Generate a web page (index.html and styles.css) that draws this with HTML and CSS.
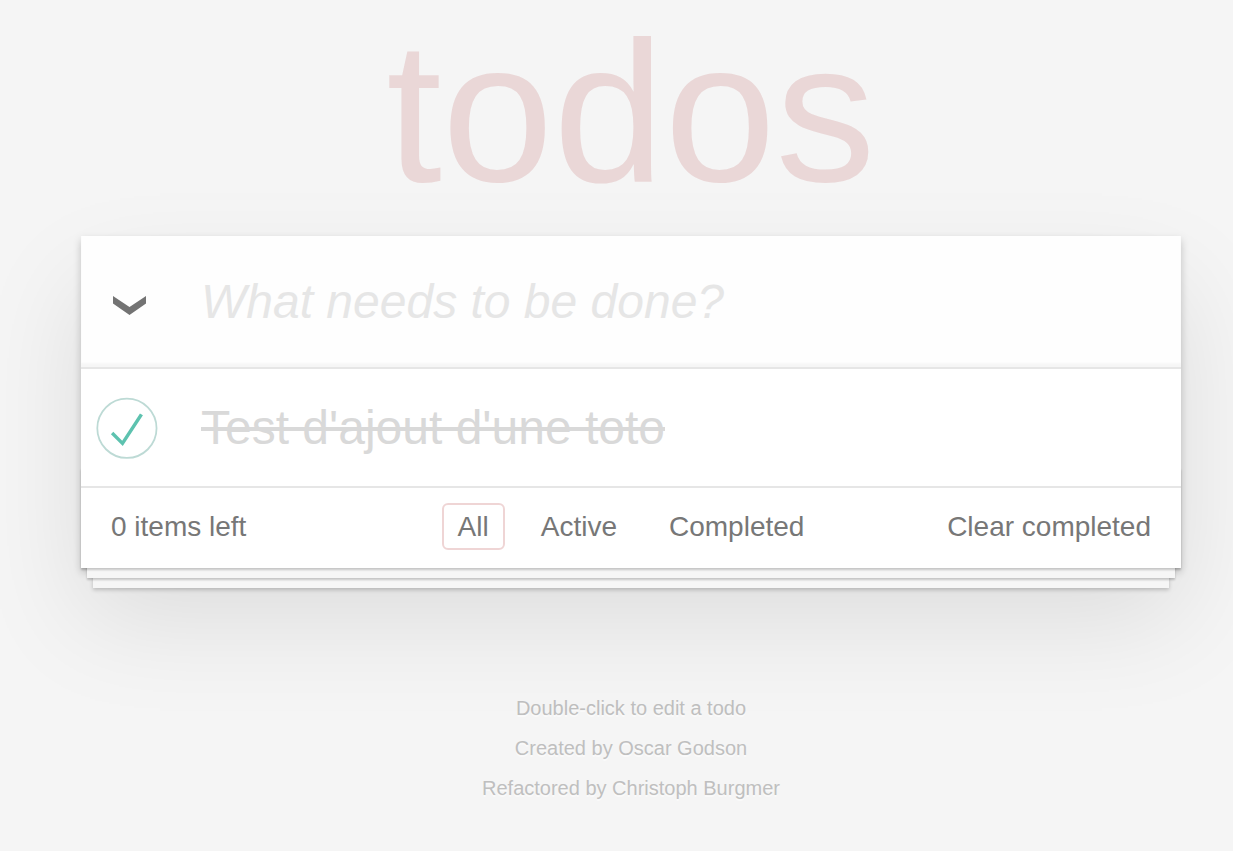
FILE: index.html
```html
<!DOCTYPE html>
<html lang="fr">
<head>
<meta charset="utf-8">
<title>todos</title>
<link rel="stylesheet" href="styles.css">
</head>
<body>
<div class="page">
  <h1 class="title">todos</h1>
  <section class="todoapp">
    <header class="header">
      <span class="toggle-all">
        <svg class="chevron" width="33" height="19" viewBox="0 0 33 19"><polygon points="0,0 16.5,11 33,0 33,7.5 16.5,19 0,7.5" fill="#737373"/></svg>
      </span>
      <input class="new-todo" placeholder="What needs to be done?">
    </header>
    <ul class="todo-list">
      <li class="todo completed">
        <svg class="toggle" width="80" height="80" viewBox="-10 -18 100 135"><circle cx="50" cy="50" r="50" fill="none" stroke="#bddad5" stroke-width="3"/><path fill="#5dc2af" d="M72 25L42 71 27 56l-4 4 20 20 34-52z"/></svg>
        <span class="label">Test d'ajout d'une toto</span>
      </li>
    </ul>
    <footer class="footer">
      <span class="todo-count">0 items left</span>
      <ul class="filters">
        <li><a class="filter selected">All</a></li>
        <li><a class="filter">Active</a></li>
        <li><a class="filter">Completed</a></li>
      </ul>
      <span class="clear-completed">Clear completed</span>
    </footer>
  </section>
  <footer class="info">
    <p>Double-click to edit a todo</p>
    <p>Created by Oscar Godson</p>
    <p>Refactored by Christoph Burgmer</p>
  </footer>
</div>
</body>
</html>
```
FILE: styles.css
```css
html, body {
  margin: 0;
  padding: 0;
}

body {
  background: #f5f5f5;
  color: #4d4d4d;
  font-family: "Liberation Sans", Arial, Helvetica, sans-serif;
  font-size: 28px;
}

.page {
  width: 1100px;
  margin: 0 0 0 81px;
  padding-top: 12px;
}

.title {
  margin: 0 0 24px;
  height: 200px;
  font-size: 200px;
  line-height: 200px;
  font-weight: 100;
  text-align: center;
  color: rgba(175, 47, 47, 0.15);
}

.todoapp {
  background: #fff;
  position: relative;
  box-shadow: 0 4px 8px 0 rgba(0, 0, 0, 0.2),
              0 50px 100px 0 rgba(0, 0, 0, 0.1);
}

.header {
  display: flex;
  align-items: center;
  height: 131px;
  background: rgba(0, 0, 0, 0.003);
  box-shadow: inset 0 -4px 2px rgba(0, 0, 0, 0.03);
}

.toggle-all {
  width: 120px;
  flex: none;
  box-sizing: border-box;
  padding-left: 32px;
  display: flex;
  align-items: center;
}

.chevron {
  display: block;
  margin-top: 8px;
}

.new-todo {
  flex: 1;
  min-width: 0;
  height: 131px;
  box-sizing: border-box;
  margin: 0;
  padding: 0 32px 0 0;
  border: none;
  outline: none;
  background: transparent;
  font-family: inherit;
  font-size: 48px;
  color: inherit;
}

.new-todo::placeholder {
  font-style: italic;
  font-weight: 300;
  color: #e6e6e6;
}

.todo-list {
  margin: 0;
  padding: 0;
  list-style: none;
  border-top: 2px solid #e6e6e6;
}

.todo {
  display: flex;
  align-items: center;
  height: 117px;
  font-size: 48px;
}

.todo + .todo {
  border-top: 2px solid #ededed;
}

.toggle {
  display: block;
  flex: none;
}

.label {
  margin-left: 40px;
  line-height: 57.6px;
}

.completed .label {
  color: #d9d9d9;
  text-decoration: line-through;
}

.footer {
  position: relative;
  display: grid;
  grid-template-columns: 1fr auto 1fr;
  height: 40px;
  padding: 19px 30px 21px;
  border-top: 2px solid #e6e6e6;
  color: #777;
  font-size: 28px;
  line-height: 40px;
}

.footer::before {
  content: "";
  position: absolute;
  left: 0;
  right: 0;
  bottom: 0;
  height: 100px;
  pointer-events: none;
  box-shadow: 0 2px 2px rgba(0, 0, 0, 0.2),
              0 16px 0 -6px #f6f6f6,
              0 18px 2px -6px rgba(0, 0, 0, 0.2),
              0 32px 0 -12px #f6f6f6,
              0 34px 4px -12px rgba(0, 0, 0, 0.2);
}

.todo-count {
  justify-self: start;
}

.filters {
  margin: 0;
  padding: 0;
  list-style: none;
  display: flex;
  gap: 8px;
}

.filters li {
  display: block;
}

.filter {
  display: inline;
  margin: 6px;
  padding: 6px 14px;
  border: 2px solid transparent;
  border-radius: 6px;
  color: inherit;
  text-decoration: none;
}

.filter.selected {
  border-color: rgba(175, 47, 47, 0.2);
}

.clear-completed {
  justify-self: end;
}

.info {
  margin-top: 130px;
  color: #bfbfbf;
  font-size: 20px;
  text-align: center;
  text-shadow: 0 2px 0 rgba(255, 255, 255, 0.5);
}

.info p {
  margin: 20px 0;
  line-height: 1;
}
```
